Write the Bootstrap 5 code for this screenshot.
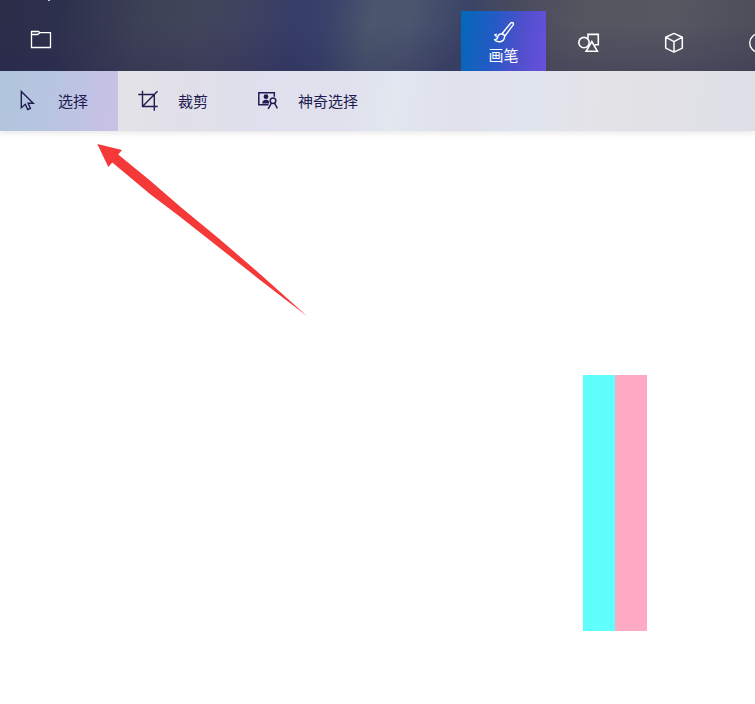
<!DOCTYPE html>
<html lang="zh-CN">
<head>
<meta charset="utf-8">
<meta name="viewport" content="width=device-width, initial-scale=1">
<title>画笔</title>
<link href="https://cdn.jsdelivr.net/npm/bootstrap@5.3.0/dist/css/bootstrap.min.css" rel="stylesheet">
<style>
body{font-family:"Noto Sans CJK SC",sans-serif;font-size:15px;line-height:20px;height:704px;background:#fff}
svg{display:block;flex:none;fill:none;stroke:currentColor}
.topbar{height:71px;padding-top:11px;color:#fff;
background:linear-gradient(180deg,rgba(40,35,80,0) 35%,rgba(40,35,80,.25)),linear-gradient(100deg,#2b2d49 0,#2d304c 8%,#3d4156 19%,#41455a 26%,#40435e 31%,#363d68 39%,#38426a 43%,#4a576d 49%,#4a556e 54%,#3b4468 61%,#484a5e 67%,#54555f 76%,#555761 88%,#4b4d5a 100%)}
.folder{width:82px;height:60px;padding-bottom:4px}
.tool-tabs{margin-right:-46px}
.tool-tab{width:85px;height:60px;flex:none}
.tool-tab.active{background:linear-gradient(98deg,#0766b9 5%,#235bc5 38%,#4c50ca 66%,#6850dc 98%)}
.brush-icon{margin:9px 0 1px}
.shapes-icon{margin-left:1px}
.title-tick{left:45px;top:0}
.toolbar{height:60px;color:#211b50;background:linear-gradient(96deg,#e3e3e7 15%,#e1e0e9 24%,#dfe0ed 34%,#e0e1ed 46%,#e2e7f0 52%,#dfe0eb 61%,#e1e5ef 70%,#e3e3e8 78%,#e1e1e6 85%,#dfdfe8 100%);box-shadow:0 1px 7px rgba(0,0,0,.13)}
.tool-btn{height:60px;padding-left:18px;white-space:nowrap}
.tool-btn span{margin-left:18px}
.w-tool{width:118px}
.w-crop{width:120px}
.tool-btn.active{background:linear-gradient(100deg,#b0c5dc,#b8c5e1 45%,#c5c1e5 85%,#c8c2e6)}
.arrow{left:90px;top:136px;fill:#f53838;stroke:none}
.canvas{padding:244px 0 0 583px}
.stripe{width:32px;height:256px}
.cyan{background:#60fffb}.pink{background:#ffaac5}
</style>
<script src="https://cdn.jsdelivr.net/npm/bootstrap@5.3.0/dist/js/bootstrap.bundle.min.js"></script>
</head>
<body class="m-0 overflow-hidden position-relative">
<header class="topbar d-flex overflow-hidden position-relative">
  <svg class="title-tick position-absolute" width="8" height="2"><path d="M3 0l1 .5 1-.5" stroke-width="1"/></svg>
  <div class="folder d-flex align-items-center justify-content-center flex-shrink-0">
    <svg width="22" height="20" viewBox="0 0 22 20" stroke-width="1.3"><path d="M1.5 2.5h7l1.4 1.2h10.6v14.8h-19zM1.5 5.5h6.2l2.2-1.8"/></svg>
  </div>
  <nav class="tool-tabs d-flex ms-auto flex-nowrap">
    <div class="tool-tab active d-flex flex-column align-items-center">
      <svg width="24" height="24" viewBox="0 0 24 24" class="brush-icon" stroke-width="1.4" stroke-linejoin="round"><path d="M9.8 14L18.6 3.2c1.7-1.6 3.7.1 2.4 2L12.7 16.4M9.8 14c-2.3-.4-3.8 1-4 3-.2 1.8-1.6 2.7-3.3 2.7 1.6 2.5 9.5 4 10.2-3.3-.2-1.3-1.4-2.3-2.9-2.4zM4.5 17.2c0-1-.2-1.7-1.7-2.4l2-.7"/></svg>
      <span>画笔</span>
    </div>
    <div class="tool-tab d-flex align-items-center justify-content-center">
      <svg width="24" height="24" viewBox="0 0 24 24" class="mt-1 shapes-icon" stroke-width="1.6"><circle cx="7" cy="11.6" r="5.2"/><path d="M11 7.5V3.4h10.3v10.4h-3.5M14.8 10.5l5.6 9.8H9.1z"/></svg>
    </div>
    <div class="tool-tab d-flex align-items-center justify-content-center">
      <svg width="24" height="24" viewBox="0 0 24 24" class="mt-1" stroke-width="1.5" stroke-linejoin="round"><path d="M12 2.4l8.3 3.8v10.9L12 21.1l-8.3-4V6.2zM3.7 6.2L12 10.6l8.3-4.4M12 10.6v10.5"/></svg>
    </div>
    <div class="tool-tab d-flex align-items-center justify-content-center">
      <svg width="24" height="24" viewBox="0 0 24 24" class="mt-1" stroke-width="1.4"><circle cx="12" cy="12" r="9.3"/></svg>
    </div>
  </nav>
</header>
<div class="toolbar d-flex">
  <div class="tool-btn w-tool active d-flex align-items-center">
    <svg width="22" height="24" viewBox="0 0 22 24" stroke-width="1.4"><path d="M3.3 2.5v16.3l4-3.5 2.4 5.2 2.7-1.2-2.3-5h5.2z"/></svg>
    <span>选择</span>
  </div>
  <div class="tool-btn w-crop d-flex align-items-center">
    <svg width="24" height="24" viewBox="0 0 24 24" stroke-width="1.4"><path d="M2.3 5.5h16v16.2M6.5 1.7v15.8h15.2M7 17L21.5 2.3"/></svg>
    <span>裁剪</span>
  </div>
  <div class="tool-btn d-flex align-items-center">
    <svg width="24" height="24" viewBox="0 0 24 24" stroke-width="1.5"><path d="M12.5 15.8H2.8v-12h15.5v4"/><circle cx="10" cy="7.7" r="2.4" fill="currentColor" stroke="none"/><path d="M6.2 14.4c0-2.4 1.6-3.7 3.8-3.7 1.5 0 2.4.6 3 1.5v2.2z" fill="currentColor" stroke="none"/><circle cx="17" cy="11.8" r="2.8"/><path d="M15.4 14.2l-3.2 5.6M18.5 14.2l2.9 5.2"/></svg>
    <span>神奇选择</span>
  </div>
</div>
<main class="canvas d-flex">
  <div class="stripe cyan"></div><div class="stripe pink"></div>
</main>
<svg class="arrow position-absolute" width="220" height="184" viewBox="90 136 220 184"><path d="M97.3 144L122 150l-3.8 4.4L150 180.5l30 26 40 33 40 34.5 47.2 42.3L260 280l-40-31.8-40-31.4-30-22.8-37.7-31.5-4 4.4z"/></svg>
</body>
</html>
